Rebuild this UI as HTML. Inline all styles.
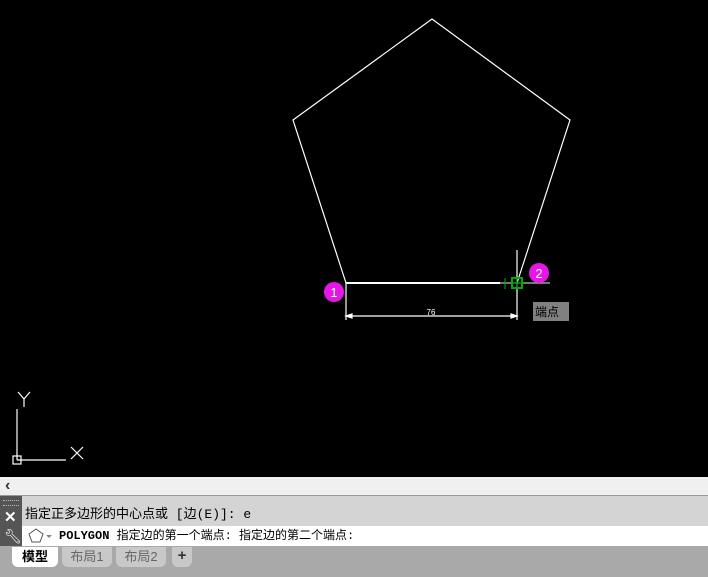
<!DOCTYPE html>
<html><head><meta charset="utf-8"><style>
body{margin:0;width:708px;height:577px;overflow:hidden;background:#000;font-family:"Liberation Sans","Noto Sans CJK SC",sans-serif;position:relative}
.abs{position:absolute}
</style></head><body>
<svg class="abs" style="left:0;top:0" width="708" height="477">
<g stroke="#fff" stroke-width="1.2" fill="none">
<polyline points="346,283 293,120 432,19 570,120 517,283"/>
<line x1="346" y1="283" x2="500" y2="283" stroke-width="2"/>
<line x1="500" y1="283" x2="550" y2="283" stroke="#bbb"/>
<line x1="346" y1="283" x2="346" y2="320"/>
<line x1="517" y1="250" x2="517" y2="320"/>
<line x1="346" y1="316" x2="517" y2="316"/>
<path d="M346,316 l6,-2 v4z M517,316 l-6,-2 v4z" fill="#fff"/>
<line x1="17" y1="409" x2="17" y2="460"/>
<line x1="17" y1="460" x2="66" y2="460"/>
<rect x="13" y="456" width="8" height="8"/>
<path d="M18,392 l6,7 l6,-7 M24,399 v8"/>
<path d="M71,447 l12,12 M83,447 l-12,12"/>
</g>
<text x="431" y="315" fill="#fff" font-size="8" text-anchor="middle">76</text>
<line x1="505" y1="278" x2="505" y2="289" stroke="#0a0" stroke-width="1"/>
<rect x="512" y="278" width="10" height="10" fill="none" stroke="#0a0" stroke-width="2"/>
<line x1="517" y1="278" x2="517" y2="288" stroke="#0a0"/>
<line x1="512" y1="283" x2="522" y2="283" stroke="#0a0"/>
<circle cx="334" cy="292" r="10" fill="#e815e8"/>
<text x="334" y="297" fill="#fff" font-size="13" text-anchor="middle">1</text>
<circle cx="539" cy="273" r="10" fill="#e815e8"/>
<text x="539" y="278" fill="#fff" font-size="13" text-anchor="middle">2</text>
<rect x="533" y="302" width="36" height="19" fill="#808080"/>
<text x="535" y="316" fill="#000" font-size="12">端点</text>
</svg>
<div class="abs" style="left:0;top:477px;width:708px;height:19px;background:#f0f0f0;border-bottom:1px solid #999;box-sizing:border-box;font-size:16px;font-weight:bold;color:#333;padding-left:5px;line-height:17px">‹</div>
<div class="abs" style="left:0;top:496px;width:22px;height:50px;background:#555"></div>
<div class="abs" style="left:3px;top:500px;width:16px;height:4px;border-top:1px dotted #bbb;border-bottom:1px dotted #bbb"></div>
<div class="abs" style="left:4px;top:508px;color:#fff;font-size:15px;font-weight:bold">✕</div>
<div class="abs" style="left:4px;top:528px;color:#fff;font-size:14px">🔧︎</div>
<div class="abs" style="left:22px;top:496px;width:686px;height:30px;background:#d4d4d4;font-size:13px;color:#000;line-height:38px;padding-left:3px;box-sizing:border-box;font-family:'Liberation Mono','Noto Sans CJK SC',monospace">指定正多边形的中心点或 [边(E)]: e</div>
<div class="abs" style="left:22px;top:526px;width:686px;height:20px;background:#fff;font-size:12px;line-height:20px;box-sizing:border-box;padding-left:37px;font-family:'Liberation Mono','Noto Sans CJK SC',monospace"><b>POLYGON</b> 指定边的第一个端点: 指定边的第二个端点:</div>
<svg class="abs" style="left:27px;top:528px" width="28" height="16"><polygon points="9,1 16,6 13,14 5,14 2,6" fill="#fff" stroke="#555"/><path d="M19,7 h6 l-3,3z" fill="#888"/></svg>
<div class="abs" style="left:0;top:546px;width:708px;height:31px;background:#a9a9a9"></div>
<div class="abs" style="left:12px;top:547px;width:46px;height:20px;background:#fff;border-radius:0 0 6px 6px;font-size:13px;font-weight:bold;line-height:20px;text-align:center">模型</div>
<div class="abs" style="left:62px;top:547px;width:50px;height:20px;background:#c8c8c8;border-radius:0 0 6px 6px;font-size:13px;color:#666;line-height:20px;text-align:center">布局1</div>
<div class="abs" style="left:116px;top:547px;width:50px;height:20px;background:#c8c8c8;border-radius:0 0 6px 6px;font-size:13px;color:#666;line-height:20px;text-align:center">布局2</div>
<div class="abs" style="left:172px;top:547px;width:20px;height:20px;background:#c8c8c8;border-radius:0 0 6px 6px;font-size:15px;font-weight:bold;color:#333;line-height:18px;text-align:center">+</div>
</body></html>
